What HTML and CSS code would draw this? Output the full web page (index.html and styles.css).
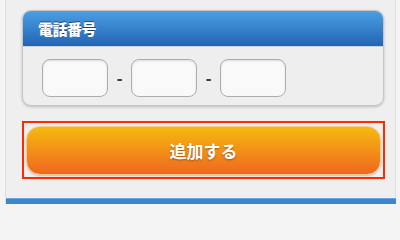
FILE: index.html
```html
<!DOCTYPE html>
<html lang="ja">
<head>
<meta charset="utf-8">
<link rel="stylesheet" href="styles.css">
</head>
<body>
<div class="page">
  <div class="card">
    <div class="card-head">電話番号</div>
    <div class="card-body">
      <div class="tel-row">
        <input class="tel" type="text">
        <span class="sep">-</span>
        <input class="tel" type="text">
        <span class="sep">-</span>
        <input class="tel" type="text">
      </div>
    </div>
  </div>
  <div class="focus-box">
    <button class="add-btn" type="button">追加する</button>
  </div>
  <div class="spacer"></div>
  <div class="bottom-bar"></div>
</div>
</body>
</html>
```

FILE: styles.css
```css
html, body {
  margin: 0;
  padding: 0;
  background: #f4f4f4;
  height: 204px;
  overflow: hidden;
  font-family: "Noto Sans CJK JP", "Noto Sans", sans-serif;
}
.page {
  margin-left: 5px;
  width: 391px;
  height: 204px;
  box-sizing: border-box;
  border-left: 1px solid #dedede;
  border-right: 1px solid #dedede;
  background: #efefef;
  padding: 10px 12px 0 16px;
  display: flex;
  flex-direction: column;
}
.card {
  border: 1px solid #c6c6c6;
  border-radius: 9px;
  background: #eeeeee;
  box-shadow: 0 1px 3px rgba(0,0,0,0.22);
  overflow: hidden;
  width: 362px;
  box-sizing: border-box;
}
.card-head {
  height: 36px;
  box-sizing: border-box;
  padding-left: 15px;
  display: flex;
  align-items: center;
  background: linear-gradient(#4a9fe2, #2364b4);
  border-bottom: 1px solid #c9d3de;
  color: #fff;
  font-weight: 900;
  font-size: 15px;
  letter-spacing: -0.5px;
  text-shadow: 0 -1px 0 rgba(0,0,0,0.5);
}
.card-body {
  padding: 12px 0 8px 19px;
}
.tel-row {
  display: flex;
  align-items: center;
}
.tel {
  width: 66px;
  height: 38px;
  box-sizing: border-box;
  margin: 0;
  border: 1px solid #adadad;
  border-radius: 8px;
  background: #f9f9f9;
  box-shadow: inset 0 1px 2px rgba(0,0,0,0.12);
}
.sep {
  width: 23px;
  text-align: center;
  font-family: "Liberation Sans", sans-serif;
  font-weight: bold;
  font-size: 17px;
  color: #3a3a3a;
  line-height: 1;
}
.focus-box {
  margin-top: 15px;
  width: 363px;
  height: 58px;
  box-sizing: border-box;
  border: 2px solid #ff2a00;
  padding: 3px 2px 2px 2px;
}
.add-btn {
  width: 100%;
  height: 49px;
  margin: 0;
  border: 1px solid #f7c98a;
  border-radius: 14px;
  background: linear-gradient(#f5ba0f, #f0671f);
  color: #fff;
  font-family: "Noto Sans CJK JP", "Noto Sans", sans-serif;
  font-weight: bold;
  font-size: 17px;
  text-shadow: 0 1px 2px rgba(0,0,0,0.35);
  box-shadow: 0 1px 2px rgba(0,0,0,0.2);
  padding: 0;
}
.spacer {
  flex: 1;
}
.bottom-bar {
  height: 5px;
  margin: 0 -13px 0 -16px;
  background: #3b86cf;
  border-top: 1px solid #6aa7e0;
}
```
